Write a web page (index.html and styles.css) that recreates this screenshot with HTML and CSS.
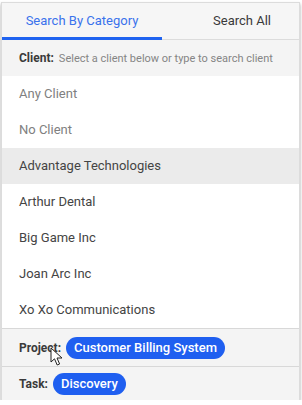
FILE: index.html
```html
<!DOCTYPE html>
<html lang="en">
<head>
  <meta charset="UTF-8">
  <meta name="viewport" content="width=device-width, initial-scale=1.0">
  <title>Client Picker</title>
  <link rel="stylesheet" href="styles.css">
</head>
<body>
  <div class="picker">
    <nav class="tabs">
      <div class="tab active">Search By Category</div>
      <div class="tab">Search All</div>
    </nav>
    <div class="field-head">
      <span class="label">Client:</span>
      <span class="hint">Select a client below or type to search client</span>
    </div>
    <ul class="options">
      <li class="option muted">Any Client</li>
      <li class="option muted">No Client</li>
      <li class="option hover">Advantage Technologies</li>
      <li class="option">Arthur Dental</li>
      <li class="option">Big Game Inc</li>
      <li class="option">Joan Arc Inc</li>
      <li class="option">Xo Xo Communications</li>
    </ul>
    <div class="field-row project">
      <span class="label">Project:</span>
      <span class="chip">Customer Billing System</span>
      <svg class="cursor" width="14" height="20" viewBox="0 0 14 20">
        <path d="M1 1 L1 15 L4.5 11.8 L7.2 18 L9.6 17 L7 11 L12 11 Z" fill="#fff" stroke="#222" stroke-width="1"/>
      </svg>
    </div>
    <div class="field-row task">
      <span class="label">Task:</span>
      <span class="chip">Discovery</span>
    </div>
  </div>
</body>
</html>
```

FILE: styles.css
```css
body {
  margin: 0;
  font-family: Roboto, "Liberation Sans", sans-serif;
  background: #fff;
}
.picker {
  margin: 2px 2px 0 1px;
  border: 1px solid #dcdcdc;
  border-bottom: none;
  background: #fff;
  box-shadow: 0 2px 3px rgba(0, 0, 0, 0.35);
  overflow: hidden;
}
.tabs {
  display: grid;
  grid-template-columns: 160px 160px;
  border-bottom: 1px solid #dcdcdc;
  background: #f6f6f6;
}
.tab {
  height: 36px;
  line-height: 36px;
  text-align: center;
  font-size: 13px;
  color: #3a3a3a;
}
.tab.active {
  color: #3a72ec;
  box-shadow: inset 0 -3px 0 #1f63f0;
  margin-bottom: -1px;
  height: 37px;
}
.field-head {
  height: 36px;
  display: flex;
  align-items: center;
  padding-left: 17px;
  background: #f4f4f4;
}
.label {
  font-size: 12px;
  font-weight: bold;
  color: #3a3a3a;
}
.hint {
  font-size: 11px;
  color: #858585;
  margin-left: 5px;
}
.options {
  list-style: none;
  margin: 0;
  padding: 0;
  border-bottom: 1px solid #d8d8d8;
}
.option {
  height: 36px;
  line-height: 36px;
  padding-left: 17px;
  font-size: 13px;
  color: #444;
}
.option.muted {
  color: #808080;
}
.option.hover {
  background: #ebebeb;
}
.field-row {
  position: relative;
  display: flex;
  align-items: center;
  gap: 5px;
  padding-left: 17px;
  background: #f4f4f4;
}
.field-row.project {
  height: 37px;
  border-bottom: 1px solid #d8d8d8;
}
.field-row.task {
  height: 33px;
}
.chip {
  background: #1f5ff0;
  color: #fff;
  font-size: 13px;
  font-weight: 500;
  height: 22px;
  line-height: 22px;
  padding: 0 8px;
  border-radius: 11px;
}
.cursor {
  position: absolute;
  left: 48px;
  top: 18px;
}
```
